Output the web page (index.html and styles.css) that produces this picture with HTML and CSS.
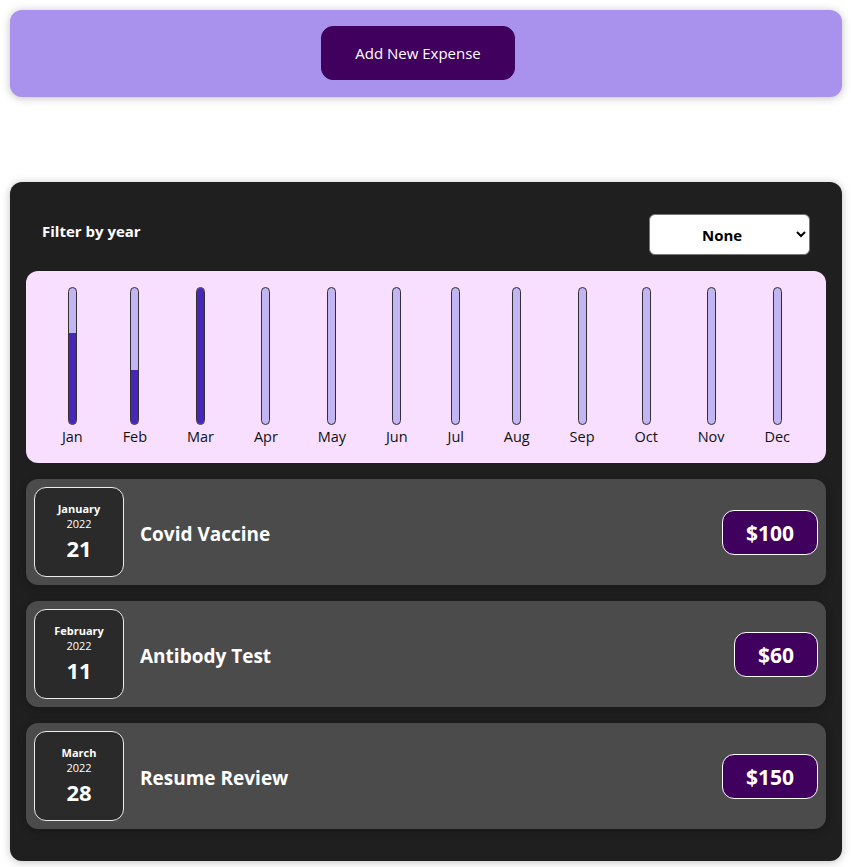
FILE: index.html
```html
<!DOCTYPE html>
<html>
<head>
<meta charset="utf-8">
<link rel="stylesheet" href="styles.css">
</head>
<body>
<div class="new-expense">
  <button class="add-btn">Add New Expense</button>
</div>

<div class="expenses">
  <div class="filter">
    <label class="filter-label">Filter by year</label>
    <select class="filter-select">
      <option>None</option>
      <option>2022</option>
      <option>2021</option>
    </select>
  </div>

  <div class="chart">
    <div class="bar"><div class="bar-inner"><div class="bar-fill" style="height:66.7%"></div></div><div class="bar-label">Jan</div></div>
    <div class="bar"><div class="bar-inner"><div class="bar-fill" style="height:40%"></div></div><div class="bar-label">Feb</div></div>
    <div class="bar"><div class="bar-inner"><div class="bar-fill" style="height:100%"></div></div><div class="bar-label">Mar</div></div>
    <div class="bar"><div class="bar-inner"><div class="bar-fill" style="height:0%"></div></div><div class="bar-label">Apr</div></div>
    <div class="bar"><div class="bar-inner"><div class="bar-fill" style="height:0%"></div></div><div class="bar-label">May</div></div>
    <div class="bar"><div class="bar-inner"><div class="bar-fill" style="height:0%"></div></div><div class="bar-label">Jun</div></div>
    <div class="bar"><div class="bar-inner"><div class="bar-fill" style="height:0%"></div></div><div class="bar-label">Jul</div></div>
    <div class="bar"><div class="bar-inner"><div class="bar-fill" style="height:0%"></div></div><div class="bar-label">Aug</div></div>
    <div class="bar"><div class="bar-inner"><div class="bar-fill" style="height:0%"></div></div><div class="bar-label">Sep</div></div>
    <div class="bar"><div class="bar-inner"><div class="bar-fill" style="height:0%"></div></div><div class="bar-label">Oct</div></div>
    <div class="bar"><div class="bar-inner"><div class="bar-fill" style="height:0%"></div></div><div class="bar-label">Nov</div></div>
    <div class="bar"><div class="bar-inner"><div class="bar-fill" style="height:0%"></div></div><div class="bar-label">Dec</div></div>
  </div>

  <ul class="list">
    <li class="item">
      <div class="date">
        <div class="date-month">January</div>
        <div class="date-year">2022</div>
        <div class="date-day">21</div>
      </div>
      <div class="desc">
        <h2 class="title">Covid Vaccine</h2>
        <div class="price">$100</div>
      </div>
    </li>
    <li class="item">
      <div class="date">
        <div class="date-month">February</div>
        <div class="date-year">2022</div>
        <div class="date-day">11</div>
      </div>
      <div class="desc">
        <h2 class="title">Antibody Test</h2>
        <div class="price">$60</div>
      </div>
    </li>
    <li class="item">
      <div class="date">
        <div class="date-month">March</div>
        <div class="date-year">2022</div>
        <div class="date-day">28</div>
      </div>
      <div class="desc">
        <h2 class="title">Resume Review</h2>
        <div class="price">$150</div>
      </div>
    </li>
  </ul>
</div>
</body>
</html>
```

FILE: styles.css
```css
* { box-sizing: border-box; }

body {
  margin: 0;
  padding: 10px 9px 10px 10px;
  font-family: "Open Sans", "Noto Sans", sans-serif;
  background: #ffffff;
}

.new-expense {
  background: #a892ee;
  padding: 16px;
  border-radius: 12px;
  text-align: center;
  box-shadow: 0 1px 8px rgba(0, 0, 0, 0.25);
  height: 87px;
}

.add-btn {
  font: inherit;
  font-size: 15px;
  padding: 0 32px 0 32px;
  height: 54px;
  width: 194px;
  border: 1px solid #40005d;
  background: #40005d;
  color: #ffffff;
  border-radius: 12px;
  margin-right: 16px;
  cursor: pointer;
}

.expenses {
  margin-top: 85px;
  background: #1f1f1f;
  padding: 16px;
  border-radius: 12px;
  box-shadow: 0 1px 8px rgba(0, 0, 0, 0.25);
}

.filter {
  color: #ffffff;
  padding: 0 16px;
  display: flex;
  align-items: center;
  justify-content: space-between;
  margin: 16px 0;
}

.filter-label {
  font-weight: bold;
  font-size: 15px;
  margin-bottom: 8px;
}

.filter-select {
  font: inherit;
  font-size: 15px;
  font-weight: bold;
  width: 161px;
  height: 41px;
  padding: 0 8px 0 48px;
  border-radius: 6px;
  border: 1px solid #767676;
  background: #ffffff;
  color: #000000;
}

.chart {
  padding: 16px;
  border-radius: 12px;
  background: #f8dfff;
  display: flex;
  justify-content: space-around;
  height: 192px;
}

.bar {
  height: 100%;
  display: flex;
  flex-direction: column;
  align-items: center;
}

.bar-inner {
  flex: 1;
  width: 9px;
  border: 1px solid #313131;
  border-radius: 12px;
  background: #c3b4f3;
  overflow: hidden;
  display: flex;
  flex-direction: column;
  justify-content: flex-end;
}

.bar-fill {
  background: #4826b9;
  width: 100%;
}

.bar-label {
  font-size: 14.5px;
  line-height: 21px;
  padding-top: 1px;
  color: #111111;
}

.list {
  list-style: none;
  padding: 0;
  margin: 0;
}

.item {
  display: flex;
  align-items: center;
  padding: 8px;
  margin: 16px 0;
  border-radius: 12px;
  background: #4b4b4b;
  box-shadow: 0 2px 8px rgba(0, 0, 0, 0.25);
}

.date {
  display: flex;
  flex-direction: column;
  width: 90px;
  height: 90px;
  border: 1px solid #ececec;
  background: #2a2a2a;
  color: #ffffff;
  border-radius: 12px;
  align-items: center;
  justify-content: center;
}

.date-month {
  font-size: 11px;
  font-weight: bold;
  line-height: 15px;
  margin-top: -1px;
}

.date-year {
  font-size: 11px;
  line-height: 16px;
}

.date-day {
  font-size: 22px;
  font-weight: bold;
  line-height: 30px;
  padding-top: 1px;
}

.desc {
  flex: 1;
  display: flex;
  align-items: center;
  justify-content: space-between;
  margin-left: 16px;
}

.title {
  color: #ffffff;
  font-size: 19px;
  font-weight: bold;
  margin: 0;
  padding-top: 3px;
}

.price {
  font-size: 21px;
  font-weight: bold;
  color: #ffffff;
  background: #40005d;
  border: 1px solid #ffffff;
  padding: 1px 23px 0;
  height: 45px;
  line-height: 42px;
  border-radius: 12px;
}
```
